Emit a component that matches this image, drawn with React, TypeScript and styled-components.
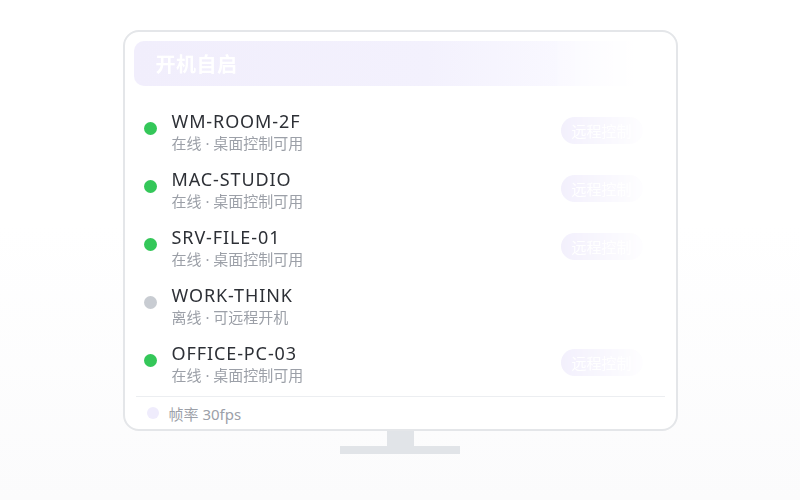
import React from 'react';
import styled, { createGlobalStyle } from 'styled-components';

const GlobalStyle = createGlobalStyle`
    html, body {
        margin: 0;
        padding: 0;
    }
    body {
        font-family: "Noto Sans", "Noto Sans CJK SC", sans-serif;
    }
`;

const Page = styled.div`
    width: 800px;
    height: 500px;
    box-sizing: border-box;
    padding-top: 30px;
    display: flex;
    flex-direction: column;
    align-items: center;
    background: linear-gradient(to bottom, #ffffff 0%, #ffffff 45%, #fbfbfc 100%);
`;

const Screen = styled.div`
    width: 555px;
    height: 401px;
    box-sizing: border-box;
    border: 2px solid #e4e6e9;
    border-radius: 16px;
    background: #ffffff;
    padding: 9px 9px 0;
    display: flex;
    flex-direction: column;
`;

const Faded = styled.div`
    display: flex;
    flex-direction: column;
    -webkit-mask-image: linear-gradient(to right, #000 0%, #000 78%, transparent 97%);
    mask-image: linear-gradient(to right, #000 0%, #000 78%, transparent 97%);
`;

const Header = styled.div`
    position: relative;
    height: 45px;
    border-radius: 10px;
    background: linear-gradient(to right, #f1eefc 0%, #f3f1fd 55%, #f9f8ff 80%, #ffffff 100%);
    display: flex;
    align-items: center;
    padding-left: 22px;
    font-family: "Noto Sans CJK SC", sans-serif;
    font-size: 20px;
    font-weight: 700;
    color: #ffffff;
    letter-spacing: 0.5px;

    &::after {
        content: '';
        position: absolute;
        right: 0;
        top: 7px;
        width: 1px;
        height: 30px;
        background: #e9e9ef;
    }
`;

const List = styled.div`
    margin-top: 18px;
    display: flex;
    flex-direction: column;
`;

const Row = styled.div`
    height: 58px;
    display: flex;
    align-items: center;
    padding-left: 10px;
    padding-right: 24px;
`;

const Dot = styled.span<{ $online: boolean }>`
    width: 13px;
    height: 13px;
    border-radius: 50%;
    flex: none;
    align-self: flex-start;
    margin-top: 18px;
    background: ${p => (p.$online ? '#34c759' : '#c8ccd2')};
`;

const Info = styled.div`
    flex: 1;
    margin-left: 15px;
    display: flex;
    flex-direction: column;
`;

const Name = styled.div`
    font-size: 18px;
    line-height: 22px;
    margin-top: -2px;
    color: #2d3036;
    letter-spacing: 0.9px;
`;

const Sub = styled.div`
    font-size: 15px;
    line-height: 22px;
    color: #9ca0a8;
`;

const RemoteButton = styled.div`
    width: 82px;
    height: 27px;
    margin-bottom: 5px;
    border-radius: 14px;
    background: #f1eefc;
    color: #ffffff;
    font-family: "Noto Sans CJK SC", sans-serif;
    font-size: 15px;
    display: flex;
    align-items: center;
    padding-left: 11px;
    box-sizing: border-box;
`;

const Divider = styled.div`
    height: 1px;
    background: #eceef1;
    margin: 2px 2px 0;
`;

const Footer = styled.div`
    flex: 1;
    display: flex;
    align-items: center;
    padding-left: 13px;
    gap: 10px;
    font-size: 15px;
    color: #9ca0a8;
`;

const FooterDot = styled.span`
    width: 12px;
    height: 12px;
    border-radius: 50%;
    background: #efecfc;
`;

const Neck = styled.div`
    width: 27px;
    height: 15px;
    background: #e1e4e8;
`;

const Base = styled.div`
    width: 120px;
    height: 8px;
    background: #e1e4e8;
`;

const devices = [
    { name: 'WM-ROOM-2F', online: true },
    { name: 'MAC-STUDIO', online: true },
    { name: 'SRV-FILE-01', online: true },
    { name: 'WORK-THINK', online: false },
    { name: 'OFFICE-PC-03', online: true },
];

export default function App() {
    return (
        <>
            <GlobalStyle />
            <Page>
                <Screen>
                    <Faded>
                        <Header>开机自启</Header>
                        <List>
                            {devices.map(d => (
                                <Row key={d.name}>
                                    <Dot $online={d.online} />
                                    <Info>
                                        <Name>{d.name}</Name>
                                        <Sub>{d.online ? '在线 · 桌面控制可用' : '离线 · 可远程开机'}</Sub>
                                    </Info>
                                    {d.online && <RemoteButton>远程控制</RemoteButton>}
                                </Row>
                            ))}
                        </List>
                    </Faded>
                    <Divider />
                    <Footer>
                        <FooterDot />
                        帧率 30fps
                    </Footer>
                </Screen>
                <Neck />
                <Base />
            </Page>
        </>
    );
}
